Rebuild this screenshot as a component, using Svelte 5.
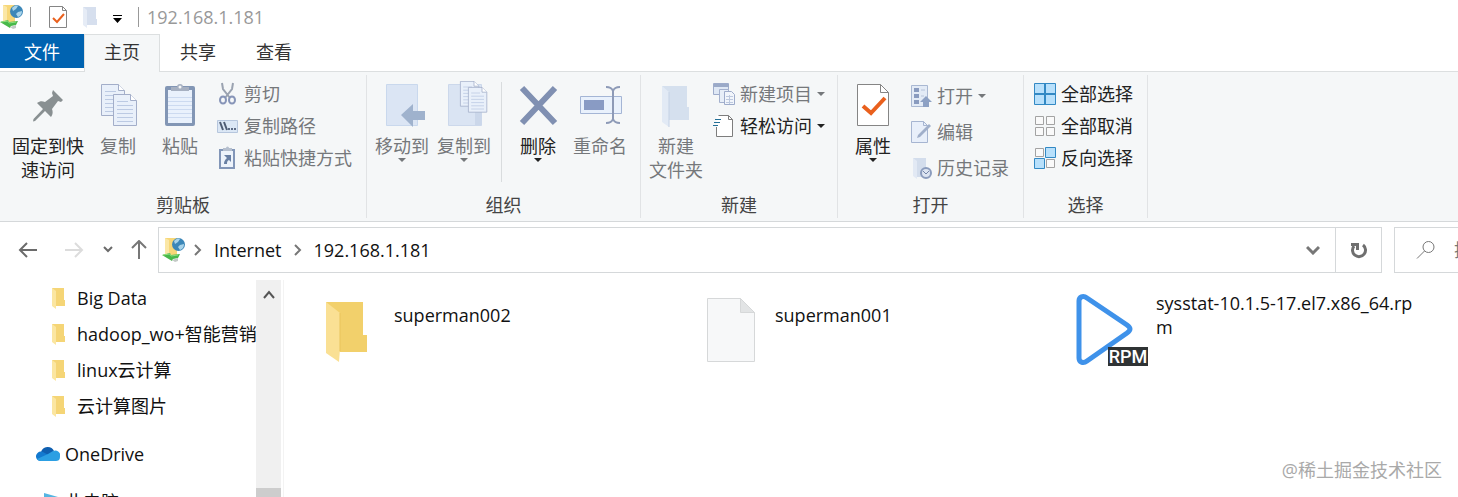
<script>
	let path = $state(['Internet', '192.168.1.181']);
	let activeTab = $state('主页');
	let search = $state('');

	const tabs = ['主页', '共享', '查看'];

	const groups = [
		{
			name: '剪贴板',
			id: 'clipboard',
			large: [
				{ label: ['固定到快', '速访问'], icon: 'pin', wide: true },
				{ label: ['复制'], icon: 'copy', disabled: true },
				{ label: ['粘贴'], icon: 'paste', disabled: true }
			],
			small: [
				{ label: '剪切', icon: 'cut', disabled: true },
				{ label: '复制路径', icon: 'copyPath', disabled: true },
				{ label: '粘贴快捷方式', icon: 'shortcut', disabled: true }
			]
		},
		{
			name: '组织',
			id: 'organize',
			large: [
				{ label: ['移动到'], icon: 'moveTo', disabled: true, menu: true },
				{ label: ['复制到'], icon: 'copyTo', disabled: true, menu: true },
				{ label: ['删除'], icon: 'remove', menu: true, divider: true },
				{ label: ['重命名'], icon: 'rename', disabled: true }
			],
			small: []
		},
		{
			name: '新建',
			id: 'create',
			large: [{ label: ['新建', '文件夹'], icon: 'newFolder', disabled: true }],
			small: [
				{ label: '新建项目', icon: 'newItem', disabled: true, menu: true },
				{ label: '轻松访问', icon: 'easyAccess', menu: true }
			]
		},
		{
			name: '打开',
			id: 'open',
			large: [{ label: ['属性'], icon: 'properties', menu: true }],
			small: [
				{ label: '打开', icon: 'open', disabled: true, menu: true },
				{ label: '编辑', icon: 'edit', disabled: true },
				{ label: '历史记录', icon: 'history', disabled: true }
			]
		},
		{
			name: '选择',
			id: 'select',
			large: [],
			small: [
				{ label: '全部选择', icon: 'selectAll' },
				{ label: '全部取消', icon: 'selectNone' },
				{ label: '反向选择', icon: 'invert' }
			]
		}
	];

	const folders = ['Big Data', 'hadoop_wo+智能营销', 'linux云计算', '云计算图片'];

	const files = [
		{ name: 'superman002', kind: 'folder' },
		{ name: 'superman001', kind: 'file' },
		{ name: 'sysstat-10.1.5-17.el7.x86_64.rpm', kind: 'rpm' }
	];
</script>

{#snippet ftpIcon()}
	<svg width="24" height="26" viewBox="0 0 24 26" aria-hidden="true">
		<path d="M3 1h12v18l-8 1-4-2z" fill="#f7d778" />
		<path d="M3 1l4 2v17l-4-3z" fill="#fbe7a6" />
		<circle cx="16.5" cy="7.5" r="6.5" fill="#3c87b8" />
		<path d="M12 4c2-2 4-3 6-2l-2 3-3 2zM18 8l4-1c0 3-1 5-4 6l-2-3z" fill="#a9d4ea" />
		<path d="M0 18l8-2 1 2 9-1-2 4-5 1-1 2z" fill="#48b84a" />
		<path d="M1 18l7-1 1 2 7-1" fill="none" stroke="#8fdd7e" />
		<path d="M10 23l6-2v3l-3 1z" fill="#c3c9c6" />
	</svg>
{/snippet}

{#snippet page(x, y)}
	<g transform={`translate(${x} ${y})`}>
		<path d="M.5.5h17l6 6v25h-23z" fill="#e9f0fa" stroke="#a3aec9" />
		<path d="M17.5.5v6h6" fill="#fff" stroke="#a3aec9" />
		<path d="M4 7.5h11M4 11.5h16M4 15.5h16M4 19.5h16M4 23.5h16M4 27.5h16" stroke="#bccae3" />
	</g>
{/snippet}

{#snippet largeIcon(name)}
	<svg width="48" height="48" viewBox="0 0 48 48" aria-hidden="true">
		{#if name === 'pin'}
			<path
				d="M29 9l10 10-2 2-3-1-6 8c1 3 1 5-1 8l-6-6-10 10-2 .5.5-2.5L19 28l-6-6c3-2 5-2 8-1l8-6-1-3z"
				fill="#899092"
			/>
		{:else if name === 'copy'}
			{@render page(7, 3)}
			{@render page(19, 13)}
		{:else if name === 'paste'}
			<rect x="9" y="5" width="30" height="40" rx="2" fill="#8296b5" />
			<path d="M12 9h24v33H12z" fill="#e9f1fc" />
			<path
				d="M12 16.5h24M12 20.5h24M12 24.5h24M12 28.5h24M12 32.5h24M12 36.5h24"
				stroke="#ccdaf0"
			/>
			<path d="M15 10V6h6a3 3 0 0 1 6 0h6v4z" fill="#a6b0c1" />
			<circle cx="24" cy="6" r="1.5" fill="#f5f6f7" />
		{:else if name === 'moveTo'}
			<path d="M8.500 3.500h31v41h-31z" fill="#dbe5f4" stroke="#c9d8ed" />
			<path d="M23 34l12-11v7h12v9H35v7z" fill="#9fb2cd" />
		{:else if name === 'copyTo'}
			<path d="M8.5 3.5h33v41h-33z" fill="#dae4f3" stroke="#ccd8eb" />
			<path d="M35 26h6v18h-6z" fill="#cbd7ea" />
			<g transform="translate(20 0) scale(.8)">{@render page(0, 0)}</g>
			<g transform="translate(28 6) scale(.8)">{@render page(0, 0)}</g>
		{:else if name === 'remove'}
			<path d="M8 7l33 35M41 7L8 42" stroke="#8090b2" stroke-width="6" />
		{:else if name === 'rename'}
			<path d="M4.5 15.5h41v17h-41z" fill="#e9f1fc" stroke="#a4b5d5" />
			<path d="M8 19h20v10H8z" fill="#899bc4" />
			<path
				d="M30 6c4 0 6 1 7 4 1-3 3-4 7-4M37 10v28M30 42c4 0 6-1 7-4 1 3 3 4 7 4"
				fill="none"
				stroke="#8d9ab7"
				stroke-width="2"
			/>
		{:else if name === 'newFolder'}
			<path d="M10 5h25v21h2v13H16z" fill="#d5e0ee" />
			<path d="M10 5l7 6v35l-7-5z" fill="#e2eaf5" />
			<path d="M17 11v35" stroke="#c5d2e5" />
		{:else if name === 'properties'}
			<path d="M8.5 3.5h23l8 8v33h-31z" fill="#fff" stroke="#858585" />
			<path d="M31.5 3.5v8h8" fill="none" stroke="#858585" />
			<path d="M14 25l8 7 14-15" fill="none" stroke="#e9601d" stroke-width="4" />
		{/if}
	</svg>
{/snippet}

{#snippet smallIcon(name)}
	<svg width="22" height="24" viewBox="0 0 22 24" aria-hidden="true">
		{#if name === 'cut'}
			<path d="M5 1l1 6 7 9M16 1l-1 6-7 9" fill="none" stroke="#9aa2b0" stroke-width="2" />
			<ellipse cx="6" cy="18" rx="3" ry="3.500" fill="none" stroke="#8795b8" stroke-width="2" />
			<ellipse cx="15" cy="18" rx="3" ry="3.500" fill="none" stroke="#8795b8" stroke-width="2" />
		{:else if name === 'copyPath'}
			<path d="M.5 6.5h20v12H.5z" fill="#dbe7f5" stroke="#b6c6dd" />
			<path d="M3 8l3 8M7 8l3 8" stroke="#4e5c73" stroke-width="2" />
			<path d="M11 14h2v2h-2zM14 14h2v2h-2zM17 14h2v2h-2z" fill="#5d6c85" />
		{:else if name === 'shortcut'}
			<path d="M3 4h14v18H3z" fill="#edf3fb" stroke="#8296b8" stroke-width="2" />
			<path d="M6 5V2h3a1 1 0 0 1 3 0h3v3z" fill="#b5bfce" />
			<path d="M7 9h7v7l-2-2c-2 1-2 2-2 4H7c0-3 1-4 3-6z" fill="#6980a4" />
		{:else if name === 'newItem'}
			<path d="M.5 1.5h15v11H.5z" fill="#dfe8f5" stroke="#9eaccb" />
			<path d="M1 2h15v3H1z" fill="#9baac8" />
			<path d="M6.5 7.5h9v13h-9z" fill="#e7eef8" stroke="#a4b1ce" />
			<path d="M11.5 9.5h7l3 3v10h-10z" fill="#f1f5fb" stroke="#9eaccb" />
			<path d="M13 14.5h7M13 17.5h7M13 20.5h7M16.5 13v9" stroke="#bdc9df" />
		{:else if name === 'easyAccess'}
			<path d="M3.5 1.5h12l4 4v17h-16z" fill="#fff" />
			<path d="M3.5 13v9.5h16v-17l-4-4h-10M15.5 1.5v4h4" fill="none" stroke="#7d7d7d" />
			<path d="M2 5.500h6M1 8.500h6M0 11.500h5" stroke="#236f96" />
		{:else if name === 'open'}
			<path d="M1.5 1.5h16v21h-16z" fill="#e3ebf6" stroke="#a9b8d2" />
			<path d="M4 4h5v4H4zM4 10h5v4H4zM4 16h5v4H4z" fill="#899bbf" />
			<path d="M11 6h4M11 12h3" stroke="#b6c3d9" />
			<path d="M16 12l6 6h-3v5h-6v-5h-3z" fill="#8da1c4" />
		{:else if name === 'edit'}
			<path d="M1.5 1.5h12l4 4v17h-16z" fill="#e8effa" stroke="#a6b5d1" />
			<path d="M13.5 1.5v4h4" fill="none" stroke="#a6b5d1" />
			<path d="M7 18l1-3L19 4l2 2L10 17z" fill="#a0afca" />
		{:else if name === 'history'}
			<path d="M3 2h13v13h1v6H6z" fill="#d3ddec" />
			<path d="M3 2l4 3v18l-4-3z" fill="#e2e9f4" />
			<circle cx="16" cy="17" r="5" fill="#dce4f1" stroke="#8b9cbd" stroke-width="2" />
			<path d="M13 15l3 3 3-3" fill="none" stroke="#7485a8" />
		{:else if name === 'selectAll'}
			<path d="M.5 1.5h21v21H.5z" fill="#b8e0fb" stroke="#3389c4" />
			<path d="M11 1v22M0 12h22" stroke="#3389c4" stroke-width="2" />
		{:else if name === 'selectNone'}
			<path
				d="M1.5 2.5h8v8h-8zM12.5 2.5h8v8h-8zM1.5 13.5h8v8h-8zM12.5 13.5h8v8h-8z"
				fill="#fafafa"
				stroke="#a3a3a3"
			/>
		{:else if name === 'invert'}
			<path d="M1.5 2.5h8v8h-8zM12.5 13.5h8v8h-8z" fill="#fafafa" stroke="#a3a3a3" />
			<path d="M11.5 1.5h10v10h-10zM.5 12.5h10v10H.5z" fill="#b8e0fb" stroke="#3389c4" />
		{/if}
	</svg>
{/snippet}

{#snippet caret()}
	<svg class="caret" width="8" height="4" viewBox="0 0 8 4" aria-hidden="true">
		<path d="M0 0h8L4 4z" fill="currentColor" />
	</svg>
{/snippet}

{#snippet chevron()}
	<svg class="chevron" width="8" height="12" viewBox="0 0 8 12" aria-hidden="true">
		<path d="M1 1l5 5-5 5" fill="none" stroke="#777" stroke-width="2" />
	</svg>
{/snippet}

<div class="explorer">
	<header class="titlebar">
		{@render ftpIcon()}
		<span class="rule"></span>
		<button class="quick first" aria-label="属性">
			<svg width="18" height="22" viewBox="0 0 18 22">
				<path d="M.5.5h13l4 4v17H.5z" fill="#fff" stroke="#858585" />
				<path d="M13.5.5v4h4" fill="none" stroke="#858585" />
				<path d="M4 12l4 4 7-8" fill="none" stroke="#e9601d" stroke-width="2" />
			</svg>
		</button>
		<button class="quick second" aria-label="新建文件夹">
			<svg width="16" height="22" viewBox="0 0 16 22">
				<path d="M0 1h13v12h1v6H3z" fill="#d6dfee" />
				<path d="M0 1l4 3v18l-4-3z" fill="#e6ecf6" />
			</svg>
		</button>
		<button class="quick third" aria-label="自定义快速访问工具栏">
			<svg width="10" height="8" viewBox="0 0 10 8">
				<path d="M0 0h9v1H0zM0 3h9L4.5 8z" fill="#000" />
			</svg>
		</button>
		<span class="rule"></span>
		<h1>192.168.1.181</h1>
	</header>

	<nav class="tabs">
		<button class="tab file-tab">文件</button>
		{#each tabs as tab}
			<button class="tab" class:active={activeTab === tab} onclick={() => (activeTab = tab)}>
				{tab}
			</button>
		{/each}
	</nav>

	<div class="ribbon">
		{#each groups as group}
			<section class="group {group.id}">
				<div class="commands">
					{#each group.large as item}
						{#if item.divider}
							<span class="divider"></span>
						{/if}
						<button class="large" class:wide={item.wide} disabled={item.disabled}>
							{@render largeIcon(item.icon)}
							{#each item.label as line}
								<span>{line}</span>
							{/each}
							{#if item.menu}
								{@render caret()}
							{/if}
						</button>
					{/each}
					{#if group.small.length}
						<div class="stack">
							{#each group.small as item}
								<button class="small" disabled={item.disabled}>
									{@render smallIcon(item.icon)}
									<span>{item.label}</span>
									{#if item.menu}
										{@render caret()}
									{/if}
								</button>
							{/each}
						</div>
					{/if}
				</div>
				<h2>{group.name}</h2>
			</section>
		{/each}
	</div>

	<div class="navbar">
		<div class="history">
			<button aria-label="后退">
				<svg width="20" height="18" viewBox="0 0 20 18">
					<path d="M9 2L2 9l7 7M2 9h17" fill="none" stroke="#6b6b6b" stroke-width="2" />
				</svg>
			</button>
			<button class="forward" aria-label="前进" disabled>
				<svg width="20" height="18" viewBox="0 0 20 18">
					<path d="M11 2l7 7-7 7M18 9H1" fill="none" stroke="#dcdcdc" stroke-width="2" />
				</svg>
			</button>
			<button class="recent" aria-label="最近浏览的位置">
				<svg width="10" height="8" viewBox="0 0 10 8">
					<path d="M1 1l4 4 4-4" fill="none" stroke="#6b6b6b" stroke-width="2" />
				</svg>
			</button>
			<button aria-label="上移">
				<svg width="16" height="20" viewBox="0 0 16 20">
					<path d="M1 8l7-7 7 7M8 1v18" fill="none" stroke="#777" stroke-width="2" />
				</svg>
			</button>
		</div>
		<div class="address">
			{@render ftpIcon()}
			{#each path as part}
				{@render chevron()}
				<button class="crumb">{part}</button>
			{/each}
			<button class="expand" aria-label="展开地址">
				<svg width="14" height="10" viewBox="0 0 14 10">
					<path d="M1 2l6 6 6-6" fill="none" stroke="#777" stroke-width="3" />
				</svg>
			</button>
			<button class="refresh" aria-label="刷新">
				<svg width="18" height="18" viewBox="0 0 18 18">
					<path d="M13 4a6.500 6.500 0 1 1-9 1" fill="none" stroke="#6f6f6f" stroke-width="3" />
					<path d="M1 2h8v7H6V5H1z" fill="#6f6f6f" />
				</svg>
			</button>
		</div>
		<label class="search">
			<svg width="20" height="20" viewBox="0 0 20 20" aria-hidden="true">
				<circle cx="12.5" cy="7" r="5.5" fill="none" stroke="#777" />
				<path d="M8.5 11L1 18.5" stroke="#777" />
			</svg>
			<input type="text" placeholder="搜索" aria-label="搜索" bind:value={search} />
		</label>
	</div>

	<main>
		<aside>
			<ul>
				{#each folders as folder}
					<li class="nested">
						<svg width="16" height="22" viewBox="0 0 16 22" aria-hidden="true">
							<path d="M1 1h12v12h1v6H4z" fill="#f5d576" />
							<path d="M1 1l4 3v18l-4-3z" fill="#fbe6a1" />
						</svg>
						<span>{folder}</span>
					</li>
				{/each}
				<li class="root">
					<svg width="24" height="16" viewBox="0 0 24 16" aria-hidden="true">
						<path d="M5 6a7 7 0 0 1 13-1l-5 7H4z" fill="#0f5fb0" />
						<path d="M0 11a5 5 0 0 1 7-5l9 5-8 4H5a5 5 0 0 1-5-4z" fill="#1379cf" />
						<path d="M12 8l5-3a5 5 0 0 1 7 6c0 3-2 4-4 4H5c-2 0-3-1-4-2z" fill="#2c9fe3" />
					</svg>
					<span>OneDrive</span>
				</li>
				<li class="root">
					<svg width="24" height="20" viewBox="0 0 24 20" aria-hidden="true">
						<path d="M8 1l14 4v12L8 15z" fill="#55b5e2" />
					</svg>
					<span>此电脑</span>
				</li>
			</ul>
		</aside>
		<div class="scrollbar">
			<button aria-label="向上滚动">
				<svg width="12" height="10" viewBox="0 0 12 10">
					<path d="M1 8l5-6 5 6" fill="none" stroke="#555" stroke-width="2" />
				</svg>
			</button>
			<span class="thumb"></span>
		</div>
		<ul class="files">
			{#each files as file}
				<li>
					{#if file.kind === 'folder'}
						<svg width="80" height="80" viewBox="0 0 80 80" aria-hidden="true">
							<path d="M17 15h37v33h4v17H30z" fill="#f2d06b" />
							<path d="M17 15l14 11v36l-1 13-13-9z" fill="#fae094" />
							<path d="M31 26v38" stroke="#e9c45d" />
						</svg>
					{:else if file.kind === 'file'}
						<svg width="80" height="80" viewBox="0 0 80 80" aria-hidden="true">
							<path d="M17.5 11.5h33l14 14v49h-47z" fill="#f7f8f9" stroke="#d6d8d9" />
							<path d="M50.5 11.5v14h14z" fill="#e2e4e5" stroke="#d6d8d9" />
						</svg>
					{:else}
						<svg width="80" height="80" viewBox="0 0 80 80" aria-hidden="true">
							<path
								d="M8 14c0-4 4-6 8-3l40 27c4 3 4 5 0 8L16 74c-4 3-8 1-8-3z"
								fill="none"
								stroke="#3f92ea"
								stroke-width="5"
							/>
							<path d="M37 60h40v19H37z" fill="#2f3334" />
							<text x="57" y="76" text-anchor="middle">RPM</text>
						</svg>
					{/if}
					<span>{file.name}</span>
				</li>
			{/each}
		</ul>
	</main>
	<p class="watermark">@稀土掘金技术社区</p>
</div>

<style>
	:global(body) {
		background: #fff;
	}

	.explorer {
		display: flex;
		flex-direction: column;
		height: 100vh;
		overflow: hidden;
		position: relative;
		background: #fff;
		color: #111;
		font-family: 'Open Sans', 'Noto Sans CJK SC', sans-serif;
		font-size: 18px;
		line-height: 24px;
	}

	button,
	input {
		margin: 0;
		padding: 0;
		border: 0;
		background: none;
		color: inherit;
		font: inherit;
	}

	svg {
		display: block;
		flex: none;
	}

	ul {
		margin: 0;
		padding: 0;
		list-style: none;
	}

	h1,
	h2 {
		margin: 0;
		font-size: 18px;
		font-weight: 400;
	}

	.titlebar {
		display: flex;
		align-items: center;
		height: 34px;
		flex: none;
	}

	.titlebar h1 {
		margin-left: 8px;
		color: #999;
	}

	.rule {
		width: 1px;
		height: 20px;
		margin-left: 6px;
		background: #999;
	}

	.first {
		margin-left: 18px;
	}

	.second {
		margin-left: 16px;
	}

	.third {
		margin: 4px 9px 0 14px;
	}

	.tabs {
		display: flex;
		height: 37px;
		flex: none;
		border-bottom: 1px solid #dcdfe0;
	}

	.tab {
		box-sizing: border-box;
		width: 76px;
		height: 38px;
		padding-bottom: 3px;
		border: 1px solid transparent;
		border-bottom: 0;
		color: #333;
	}

	.tab.active {
		border-color: #dcdfe0;
		background: #f5f7f8;
	}

	.file-tab {
		width: 84px;
		height: 34px;
		padding-bottom: 0;
		background: #0063b1;
		color: #fff;
	}

	.ribbon {
		display: flex;
		flex: none;
		border-bottom: 1px solid #d5d8da;
		background: #f5f7f8;
	}

	.group {
		display: flex;
		flex-direction: column;
		margin: 3px 0;
		padding-bottom: 1px;
		border-right: 1px solid #e1e3e5;
		color: #222;
	}

	.group h2 {
		color: #444;
		text-align: center;
	}

	.commands {
		display: flex;
		height: 114px;
		padding: 3px 14px 1px 4px;
	}

	.clipboard .commands {
		padding-left: 9px;
	}

	.organize .commands {
		padding-right: 9px;
	}

	.create .commands {
		padding-right: 12px;
	}

	.divider {
		width: 1px;
		height: 100px;
		margin: 4px 5px 0 6px;
		background: #d9dcde;
	}

	.large {
		display: flex;
		flex-direction: column;
		align-items: center;
		width: 62px;
		padding-top: 3px;
		white-space: nowrap;
	}

	.large.wide {
		width: 78px;
	}

	.large svg:first-child {
		margin-bottom: 5px;
	}

	button:disabled {
		color: #75787b;
	}

	.stack {
		margin-left: 6px;
	}

	.small {
		display: flex;
		align-items: center;
		gap: 5px;
		height: 32px;
		white-space: nowrap;
	}

	.open .small {
		height: 36px;
	}

	.navbar {
		display: flex;
		height: 46px;
		flex: none;
		padding: 5px 0 6px;
	}

	.history {
		display: flex;
		align-items: center;
		width: 140px;
		padding-left: 18px;
	}

	.forward {
		margin-left: 26px;
	}

	.recent {
		margin: 0 18px 0 19px;
	}

	.address {
		display: flex;
		flex: 1;
		align-items: center;
		box-sizing: border-box;
		padding-left: 3px;
		border: 1px solid #d5d8da;
		color: #111;
	}

	.chevron {
		margin: 0 12px 0 8px;
	}

	.crumb + .chevron {
		margin-left: 12px;
	}

	.expand {
		margin-left: auto;
		padding: 0 15px;
	}

	.refresh {
		display: grid;
		place-items: center;
		align-self: stretch;
		width: 46px;
		border-left: 1px solid #d5d8da;
	}

	.search {
		display: flex;
		align-items: center;
		box-sizing: border-box;
		width: 64px;
		margin-left: 12px;
		padding-left: 21px;
		overflow: hidden;
		border: 1px solid #d5d8da;
		border-right: 0;
	}

	.search input {
		width: 200px;
		flex: none;
		margin-left: 18px;
		outline: none;
	}

	.search input::placeholder {
		color: #777;
	}

	main {
		display: flex;
		flex: 1;
		min-height: 0;
		padding-top: 1px;
	}

	aside {
		width: 256px;
		flex: none;
		overflow: hidden;
	}

	aside li {
		display: flex;
		align-items: center;
		height: 36px;
		white-space: nowrap;
	}

	.nested {
		gap: 10px;
		padding-left: 51px;
	}

	.root {
		gap: 5px;
		margin-top: 12px;
		padding-left: 36px;
	}

	.scrollbar {
		display: flex;
		flex-direction: column;
		justify-content: space-between;
		width: 25px;
		flex: none;
		margin-right: 2px;
		background: #f0f0f0;
	}

	.scrollbar button {
		display: grid;
		place-items: center;
		height: 30px;
	}

	.thumb {
		height: 9px;
		background: #cdcdcd;
	}

	.files {
		display: grid;
		flex: 1;
		grid-template-columns: repeat(3, 1fr);
		align-content: start;
		padding: 7px 6px 0 25px;
		border-left: 1px solid #f3f3f3;
	}

	.files li {
		display: flex;
		align-items: center;
		gap: 5px;
		height: 80px;
	}

	.files span {
		max-width: 272px;
		padding-bottom: 24px;
		word-break: break-all;
	}

	.files text {
		fill: #fff;
		font-family: Roboto, sans-serif;
		font-size: 18px;
		font-weight: 500;
	}

	.watermark {
		position: absolute;
		right: 16px;
		bottom: 15px;
		margin: 0;
		color: #a9a9a9;
	}
</style>
